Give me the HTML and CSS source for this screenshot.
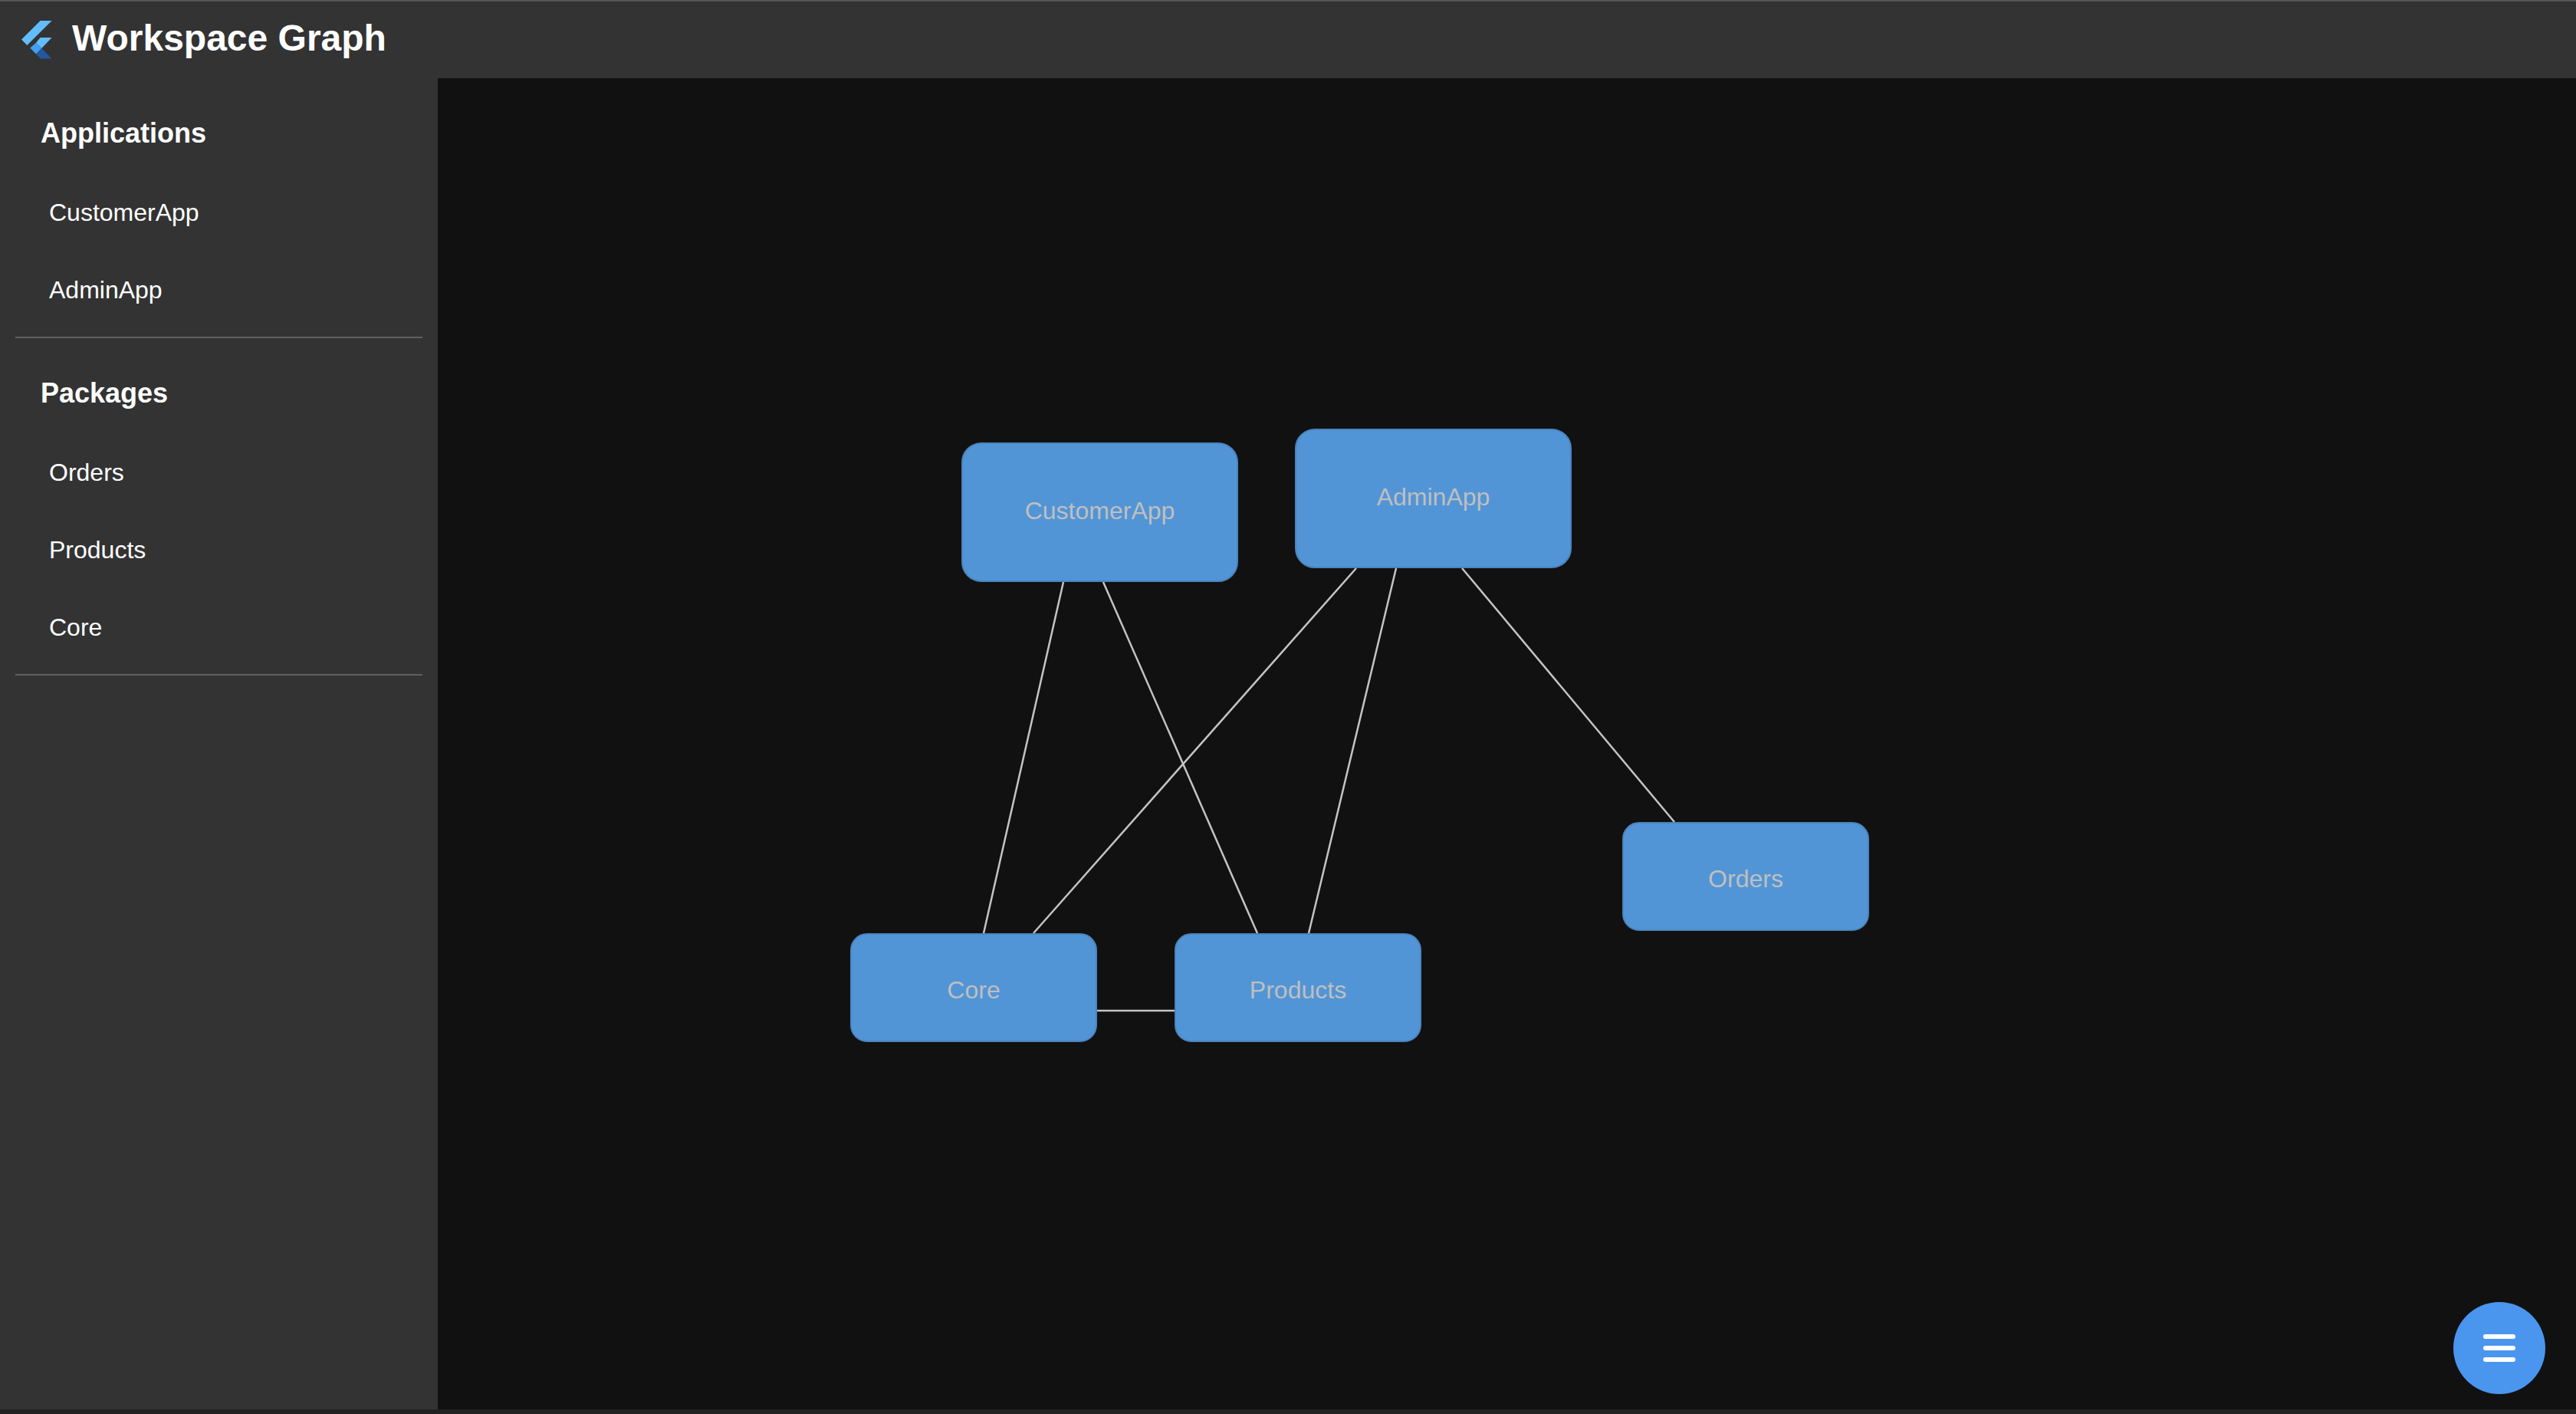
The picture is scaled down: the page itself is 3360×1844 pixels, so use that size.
FILE: index.html
```html
<!DOCTYPE html>
<html lang="en">
<head>
    <meta charset="UTF-8">
    <meta name="viewport" content="width=device-width, initial-scale=1.0">
    <title>Workspace Graph</title>
    <link rel="stylesheet" href="styles.css">
</head>
<body>
    <header class="app-bar">
        <svg class="logo" viewBox="0 0 40 50" aria-hidden="true">
            <polygon fill="#62bdfa" points="39.6,0 24.6,0 0,24.4 7.3,32"/>
            <polygon fill="#62bdfa" points="24.6,22 39.6,22 26.3,36 19,28.7"/>
            <polygon fill="#439ff0" points="19,28.7 26.3,36 19,43.4 11.3,35.4"/>
            <polygon fill="#22589f" points="19,43.4 26.3,36 39.6,49.4 24.6,49.4"/>
        </svg>
        <h1>Workspace Graph</h1>
    </header>

    <div class="main">
        <nav class="sidebar">
            <section class="nav-section">
                <h2>Applications</h2>
                <a class="nav-item">CustomerApp</a>
                <a class="nav-item">AdminApp</a>
            </section>
            <section class="nav-section">
                <h2>Packages</h2>
                <a class="nav-item">Orders</a>
                <a class="nav-item">Products</a>
                <a class="nav-item">Core</a>
            </section>
        </nav>

        <div class="canvas">
            <!-- edges use page coordinates minus the canvas offset (571, 102) -->
            <svg class="edges" viewBox="0 0 2789 1736">
                <line x1="816" y1="657" x2="712" y2="1115"/>
                <line x1="868" y1="657" x2="1069" y2="1115"/>
                <line x1="1198" y1="639" x2="777" y2="1115"/>
                <line x1="1250" y1="639" x2="1136" y2="1115"/>
                <line x1="1336" y1="639" x2="1613" y2="970"/>
                <line x1="859" y1="1216" x2="962" y2="1216"/>
            </svg>
            <div class="node node-large node-customer">CustomerApp</div>
            <div class="node node-large node-admin">AdminApp</div>
            <div class="node node-orders">Orders</div>
            <div class="node node-core">Core</div>
            <div class="node node-products">Products</div>

            <button class="fab" aria-label="Menu">
                <span></span>
                <span></span>
                <span></span>
            </button>
        </div>
    </div>
</body>
</html>
```

FILE: styles.css
```css
* {
    box-sizing: border-box;
}

html,
body {
    height: 100%;
}

body {
    margin: 0;
    padding-bottom: 6px;
    display: flex;
    flex-direction: column;
    background-color: #222;
    color: #fff;
    font-family: "Liberation Sans", Arial, sans-serif;
}

.app-bar {
    height: 102px;
    flex-shrink: 0;
    display: flex;
    align-items: center;
    gap: 26px;
    padding-left: 28px;
    background-color: #333;
    border-top: 2px solid #555;
}

.logo {
    width: 40px;
    height: 50px;
}

.app-bar h1 {
    margin: 0 0 5px;
    font-size: 48px;
    font-weight: bold;
}

.main {
    flex: 1;
    display: flex;
    min-height: 0;
}

.sidebar {
    width: 571px;
    flex-shrink: 0;
    padding: 0 20px;
    background-color: #333;
}

.nav-section {
    padding: 44px 0 10px;
    border-bottom: 2px solid #5f5f5f;
}

.nav-section h2 {
    margin: 0 0 25px 33px;
    font-size: 36px;
    line-height: 56px;
    font-weight: bold;
}

.nav-item {
    display: block;
    height: 101px;
    line-height: 101px;
    padding-left: 44px;
    font-size: 32px;
}

.canvas {
    flex: 1;
    position: relative;
    background-color: #111;
}

.edges {
    position: absolute;
    inset: 0;
    width: 100%;
    height: 100%;
}

.edges line {
    stroke: #c4c4c4;
    stroke-width: 2.5;
}

.node {
    position: absolute;
    width: 322px;
    height: 142px;
    display: flex;
    align-items: center;
    justify-content: center;
    padding-top: 7px;
    background-color: #5295d6;
    border: 2px solid #4a84bd;
    border-radius: 22px;
    color: #bfbfbf;
    font-size: 32px;
}

.node-large {
    width: 361px;
    height: 182px;
    padding-top: 0;
    padding-bottom: 4px;
    border-radius: 26px;
}

.node-customer {
    left: 683px;
    top: 475px;
}

.node-admin {
    left: 1118px;
    top: 457px;
}

.node-orders {
    left: 1545px;
    top: 970px;
}

.node-core {
    left: 538px;
    top: 1115px;
}

.node-products {
    left: 961px;
    top: 1115px;
}

.fab {
    position: absolute;
    right: 40px;
    bottom: 20px;
    width: 120px;
    height: 120px;
    display: flex;
    flex-direction: column;
    align-items: center;
    justify-content: center;
    gap: 9px;
    padding: 0;
    background-color: #4a96ee;
    border: none;
    border-radius: 50%;
}

.fab span {
    width: 42px;
    height: 6px;
    background-color: #fff;
    border-radius: 3px;
}
```
